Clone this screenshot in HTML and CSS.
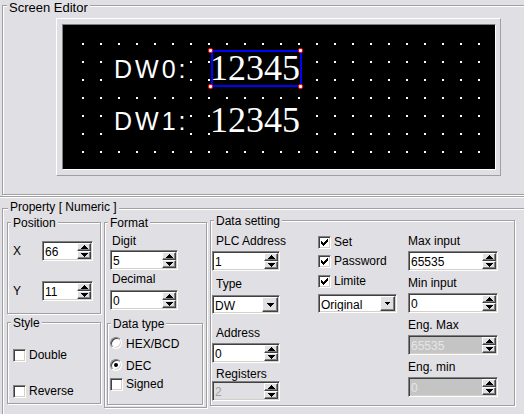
FILE: index.html
```html
<!DOCTYPE html>
<html>
<head>
<meta charset="utf-8">
<title>Screen Editor</title>
<link rel="stylesheet" href="styles.css">
</head>
<body>
<div class="grp screen">
  <span class="lg lg-screen">Screen Editor</span>
  <div class="panel">
    <div class="canvas">
      <div class="dots"></div>
      <div class="tag dw dw0">DW0:</div>
      <div class="tag num sel">12345<i class="h h-tl"></i><i class="h h-tr"></i><i class="h h-bl"></i><i class="h h-br"></i></div>
      <div class="tag dw dw1">DW1:</div>
      <div class="tag num num2">12345</div>
    </div>
  </div>
</div>
<div class="split"></div>
<div class="grp prop">
  <span class="lg lg-prop">Property [ Numeric ]</span>
  <div class="col1">
    <div class="grp pos">
      <span class="lg">Position</span>
      <div class="row">
        <span class="rl">X</span>
        <div class="spin w51"><span class="val">66</span><span class="ud"><span class="b"><svg width="7" height="4" viewBox="0 0 7 4"><path d="M3 0h1v1h1v1h1v1h1v1H0V3h1V2h1V1h1z"/></svg></span><span class="b"><svg width="7" height="4" viewBox="0 0 7 4"><path d="M0 0h7v1H6v1H5v1H4v1H3V3H2V2H1V1H0z"/></svg></span></span></div>
      </div>
      <div class="row mt20">
        <span class="rl">Y</span>
        <div class="spin w51"><span class="val">11</span><span class="ud"><span class="b"><svg width="7" height="4" viewBox="0 0 7 4"><path d="M3 0h1v1h1v1h1v1h1v1H0V3h1V2h1V1h1z"/></svg></span><span class="b"><svg width="7" height="4" viewBox="0 0 7 4"><path d="M0 0h7v1H6v1H5v1H4v1H3V3H2V2H1V1H0z"/></svg></span></span></div>
      </div>
    </div>
    <div class="grp sty">
      <span class="lg">Style</span>
      <div class="ck"><span class="cb"></span><span class="t">Double</span></div>
      <div class="ck mt23"><span class="cb"></span><span class="t">Reverse</span></div>
    </div>
  </div>

  <div class="grp fmt">
    <span class="lg">Format</span>
    <span class="lbl f-l1">Digit</span>
    <div class="spin w68 f-s1"><span class="val">5</span><span class="ud"><span class="b"><svg width="7" height="4" viewBox="0 0 7 4"><path d="M3 0h1v1h1v1h1v1h1v1H0V3h1V2h1V1h1z"/></svg></span><span class="b"><svg width="7" height="4" viewBox="0 0 7 4"><path d="M0 0h7v1H6v1H5v1H4v1H3V3H2V2H1V1H0z"/></svg></span></span></div>
    <span class="lbl f-l2">Decimal</span>
    <div class="spin w68 f-s2"><span class="val">0</span><span class="ud"><span class="b"><svg width="7" height="4" viewBox="0 0 7 4"><path d="M3 0h1v1h1v1h1v1h1v1H0V3h1V2h1V1h1z"/></svg></span><span class="b"><svg width="7" height="4" viewBox="0 0 7 4"><path d="M0 0h7v1H6v1H5v1H4v1H3V3H2V2H1V1H0z"/></svg></span></span></div>
    <div class="grp dtype">
      <span class="lg">Data type</span>
      <div class="rr"><span class="rb"></span><span class="t">HEX/BCD</span></div>
      <div class="rr mt8"><span class="rb on"></span><span class="t">DEC</span></div>
      <div class="ck mt5"><span class="cb"></span><span class="t">Signed</span></div>
    </div>
  </div>

  <div class="grp data">
    <span class="lg">Data setting</span>
    <div class="colA">
      <span class="lbl d-l1">PLC Address</span>
      <div class="spin w68 mt3"><span class="val">1</span><span class="ud"><span class="b"><svg width="7" height="4" viewBox="0 0 7 4"><path d="M3 0h1v1h1v1h1v1h1v1H0V3h1V2h1V1h1z"/></svg></span><span class="b"><svg width="7" height="4" viewBox="0 0 7 4"><path d="M0 0h7v1H6v1H5v1H4v1H3V3H2V2H1V1H0z"/></svg></span></span></div>
      <span class="lbl d-l2">Type</span>
      <div class="combo w68 mt4"><span class="val">DW</span><span class="dd w16"><svg width="7" height="4" viewBox="0 0 7 4"><path d="M0 0h7v1H6v1H5v1H4v1H3V3H2V2H1V1H0z"/></svg></span></div>
      <span class="lbl d-l3">Address</span>
      <div class="spin w68 mt3"><span class="val">0</span><span class="ud"><span class="b"><svg width="7" height="4" viewBox="0 0 7 4"><path d="M3 0h1v1h1v1h1v1h1v1H0V3h1V2h1V1h1z"/></svg></span><span class="b"><svg width="7" height="4" viewBox="0 0 7 4"><path d="M0 0h7v1H6v1H5v1H4v1H3V3H2V2H1V1H0z"/></svg></span></span></div>
      <span class="lbl d-l4">Registers</span>
      <div class="spin w68 dis"><span class="val">2</span><span class="ud"><span class="b"><svg width="7" height="4" viewBox="0 0 7 4"><path d="M3 0h1v1h1v1h1v1h1v1H0V3h1V2h1V1h1z"/></svg></span><span class="b"><svg width="7" height="4" viewBox="0 0 7 4"><path d="M0 0h7v1H6v1H5v1H4v1H3V3H2V2H1V1H0z"/></svg></span></span></div>
    </div>
    <div class="colB">
      <div class="ck mt15"><span class="cb"><svg width="11" height="11" viewBox="0 0 11 11"><path d="M2 4h1v3H2zM3 5h1v3H3zM4 6h1v3H4zM5 5h1v3H5zM6 4h1v3H6zM7 3h1v3H7zM8 2h1v3H8z"/></svg></span><span class="t">Set</span></div>
      <div class="ck mt6"><span class="cb"><svg width="11" height="11" viewBox="0 0 11 11"><path d="M2 4h1v3H2zM3 5h1v3H3zM4 6h1v3H4zM5 5h1v3H5zM6 4h1v3H6zM7 3h1v3H7zM8 2h1v3H8z"/></svg></span><span class="t">Password</span></div>
      <div class="ck mt7"><span class="cb"><svg width="11" height="11" viewBox="0 0 11 11"><path d="M2 4h1v3H2zM3 5h1v3H3zM4 6h1v3H4zM5 5h1v3H5zM6 4h1v3H6zM7 3h1v3H7zM8 2h1v3H8z"/></svg></span><span class="t">Limite</span></div>
      <div class="combo w79 mt6"><span class="val">Original</span><span class="dd w15"><svg width="5" height="3" viewBox="0 0 5 3"><path d="M0 0h5v1H4v1H3v1H2V2H1V1H0z"/></svg></span></div>
    </div>
    <div class="colC">
      <span class="lbl c-l1">Max input</span>
      <div class="spin w90 mt3"><span class="val">65535</span><span class="ud"><span class="b"><svg width="7" height="4" viewBox="0 0 7 4"><path d="M3 0h1v1h1v1h1v1h1v1H0V3h1V2h1V1h1z"/></svg></span><span class="b"><svg width="7" height="4" viewBox="0 0 7 4"><path d="M0 0h7v1H6v1H5v1H4v1H3V3H2V2H1V1H0z"/></svg></span></span></div>
      <span class="lbl mt5">Min input</span>
      <div class="spin w90 mt3"><span class="val">0</span><span class="ud"><span class="b"><svg width="7" height="4" viewBox="0 0 7 4"><path d="M3 0h1v1h1v1h1v1h1v1H0V3h1V2h1V1h1z"/></svg></span><span class="b"><svg width="7" height="4" viewBox="0 0 7 4"><path d="M0 0h7v1H6v1H5v1H4v1H3V3H2V2H1V1H0z"/></svg></span></span></div>
      <span class="lbl mt5">Eng. Max</span>
      <div class="spin w90 mt3 dis2"><span class="val">65535</span><span class="ud"><span class="b"><svg width="7" height="4" viewBox="0 0 7 4"><path d="M3 0h1v1h1v1h1v1h1v1H0V3h1V2h1V1h1z"/></svg></span><span class="b"><svg width="7" height="4" viewBox="0 0 7 4"><path d="M0 0h7v1H6v1H5v1H4v1H3V3H2V2H1V1H0z"/></svg></span></span></div>
      <span class="lbl mt5">Eng. min</span>
      <div class="spin w90 mt3 dis2"><span class="val">0</span><span class="ud"><span class="b"><svg width="7" height="4" viewBox="0 0 7 4"><path d="M3 0h1v1h1v1h1v1h1v1H0V3h1V2h1V1h1z"/></svg></span><span class="b"><svg width="7" height="4" viewBox="0 0 7 4"><path d="M0 0h7v1H6v1H5v1H4v1H3V3H2V2H1V1H0z"/></svg></span></span></div>
    </div>
  </div>
</div>
</body>
</html>
```

FILE: styles.css
```css
* { box-sizing: border-box; }
html, body { margin: 0; padding: 0; }
body {
  width: 524px;
  height: 414px;
  overflow: hidden;
  background: #e0dfe3;
  font-family: "Liberation Sans", Arial, sans-serif;
  font-size: 12px;
  line-height: 14px;
  color: #000;
}

/* etched group box */
.grp {
  position: relative;
  border: 1px solid #a0a0a0;
  box-shadow: inset 1px 1px 0 #fff, 1px 1px 0 #fff;
}
.lg {
  position: absolute;
  top: -7px;
  left: 3px;
  padding: 0 2px;
  background: #e0dfe3;
  line-height: 14px;
  white-space: nowrap;
}

/* screen editor */
.screen {
  margin: 5px 0 0 2px;
  width: 540px;
  height: 190px;
  padding: 12px 0 0 53px;
}
.lg-screen { font-size: 13px; line-height: 15px; top: -6px; left: 4px; }
.panel {
  width: 445px;
  height: 158px;
  border: 1px solid;
  border-color: #fff #a0a0a0 #a0a0a0 #fff;
  padding: 5px;
}
.canvas {
  position: relative;
  width: 434px;
  height: 146px;
  border: 1px solid;
  border-color: #808080 #fff #fff #808080;
  background: #000;
  padding: 18px 0 0 19px;
}
.dots {
  width: 398px;
  height: 110px;
  background-image:
    linear-gradient(to right, transparent 2px, #000 2px),
    linear-gradient(to bottom, #fff 2px, #000 2px);
  background-size: 18px 18px;
}
.tag {
  position: absolute;
  background: #000;
  color: #fff;
  white-space: nowrap;
}
.dw {
  left: 51px;
  width: 72px;
  height: 38px;
  font-size: 25px;
  line-height: 38px;
  letter-spacing: 3px;
}
.dw0 { top: 25px; }
.dw1 { top: 77px; }
.num {
  font-family: "Liberation Serif", "Times New Roman", serif;
  font-size: 36px;
  width: 91px;
}
.sel {
  left: 148px;
  top: 25px;
  height: 37px;
  border: 2px solid #0000ff;
  line-height: 32px;
  text-indent: -3px;
}
.num2 {
  left: 148px;
  top: 77px;
  height: 38px;
  line-height: 36px;
  text-indent: -1px;
}
.h {
  position: absolute;
  width: 5px;
  height: 5px;
  background: #fff;
  border: 1px solid #ff0000;
  border-radius: 2px;
}
.h-tl { left: -5px; top: -4px; }
.h-tr { left: 85px; top: -4px; }
.h-bl { left: -5px; top: 32px; }
.h-br { left: 85px; top: 32px; }

/* splitter */
.split {
  margin-top: 1px;
  width: 524px;
  border-top: 1px solid #a0a0a0;
  border-bottom: 1px solid #fff;
}

/* property */
.prop {
  margin: 10px 0 0 2px;
  width: 540px;
  height: 220px;
  padding: 11px 0 0 4px;
  display: flex;
  align-items: flex-start;
}
.lg-prop { left: 5px; top: -9px; }

.col1 { width: 94px; margin-top: 2px; display: flex; flex-direction: column; }
.pos { height: 92px; padding: 18px 0 0 5px; }
.sty { height: 82px; margin-top: 8px; padding: 26px 0 0 5px; }
.row { display: flex; align-items: center; }
.rl { width: 29px; line-height: 20px; }

.fmt {
  width: 103px;
  height: 186px;
  margin: 2px 0 0 3px;
  display: flex;
  flex-direction: column;
  align-items: flex-start;
}
.lbl { display: block; line-height: 14px; white-space: nowrap; }
.f-l1 { margin: 11px 0 0 7px; }
.f-s1 { margin: 2px 0 0 5px; }
.f-l2 { margin: 2px 0 0 7px; }
.f-s2 { margin: 4px 0 0 5px; }
.dtype {
  width: 96px;
  height: 82px;
  margin: 13px 0 0 2px;
  padding: 13px 0 0 2px;
}

.data {
  width: 305px;
  height: 186px;
  margin-left: 3px;
  display: flex;
  align-items: flex-start;
}
.colA { width: 68px; margin-left: 1px; display: flex; flex-direction: column; }
.colA .lbl { margin-left: 4px; }
.d-l1 { margin-top: 13px; }
.d-l2 { margin-top: 6px; }
.d-l3 { margin-top: 12px; }
.d-l4 { margin-top: 4px; }
.colB { width: 79px; margin-left: 38px; display: flex; flex-direction: column; }
.colC { width: 90px; margin-left: 11px; display: flex; flex-direction: column; }
.c-l1 { margin-top: 13px; }

.mt3 { margin-top: 3px; }
.mt4 { margin-top: 4px; }
.mt5 { margin-top: 5px; }
.mt6 { margin-top: 6px; }
.mt7 { margin-top: 7px; }
.mt8 { margin-top: 8px; }
.mt15 { margin-top: 15px; }
.mt20 { margin-top: 20px; }
.mt23 { margin-top: 23px; }

/* sunken edit boxes */
.spin, .combo {
  display: flex;
  height: 20px;
  border: 1px solid;
  border-color: #808080 #fff #fff #808080;
  box-shadow: inset 1px 1px 0 #404040, inset -1px -1px 0 #d4d0c8;
  background: #fff;
  padding: 1px;
}
.combo { height: 19px; }
.w51 { width: 51px; }
.w68 { width: 68px; }
.w79 { width: 79px; }
.w90 { width: 90px; }
.val {
  flex: 1;
  padding: 2px 0 0 1px;
  line-height: 14px;
  overflow: hidden;
  white-space: nowrap;
}
.ud { width: 14px; display: flex; flex-direction: column; }
.b, .dd {
  display: flex;
  align-items: center;
  justify-content: center;
  background: #e0dfe3;
  border: 1px solid;
  border-color: #fff #404040 #404040 #fff;
  box-shadow: inset -1px -1px 0 #808080;
}
.b { flex: 1; }
.dd.w16 { width: 16px; }
.dd.w15 { width: 15px; }
.b svg, .dd svg, .cb svg { display: block; fill: #000; shape-rendering: crispEdges; }
.dis { background: #e0dfe3; }
.dis .val { color: #a0a0a0; }
.dis2 { background: #c4c4c4; }
.dis2 .val { color: #e6e6e6; }

/* check boxes and radios */
.ck { display: flex; align-items: center; }
.ck .t { margin-left: 3px; line-height: 13px; white-space: nowrap; }
.cb {
  display: block;
  flex: none;
  width: 13px;
  height: 13px;
  border: 1px solid;
  border-color: #808080 #fff #fff #808080;
  box-shadow: inset 1px 1px 0 #404040, inset -1px -1px 0 #d4d0c8;
  background: #fff;
}
.rr { display: flex; align-items: flex-start; }
.rr .t { margin-left: 4px; line-height: 14px; }
.rb {
  display: flex;
  flex: none;
  align-items: center;
  justify-content: center;
  width: 12px;
  height: 12px;
  border-radius: 50%;
  border: 1px solid;
  border-color: #808080 #fff #fff #808080;
  box-shadow: inset 1px 1px 0 #404040, inset -1px -1px 0 #d4d0c8;
  background: #fff;
}
.rb.on::after {
  content: "";
  width: 4px;
  height: 4px;
  border-radius: 50%;
  background: #000;
}
```
